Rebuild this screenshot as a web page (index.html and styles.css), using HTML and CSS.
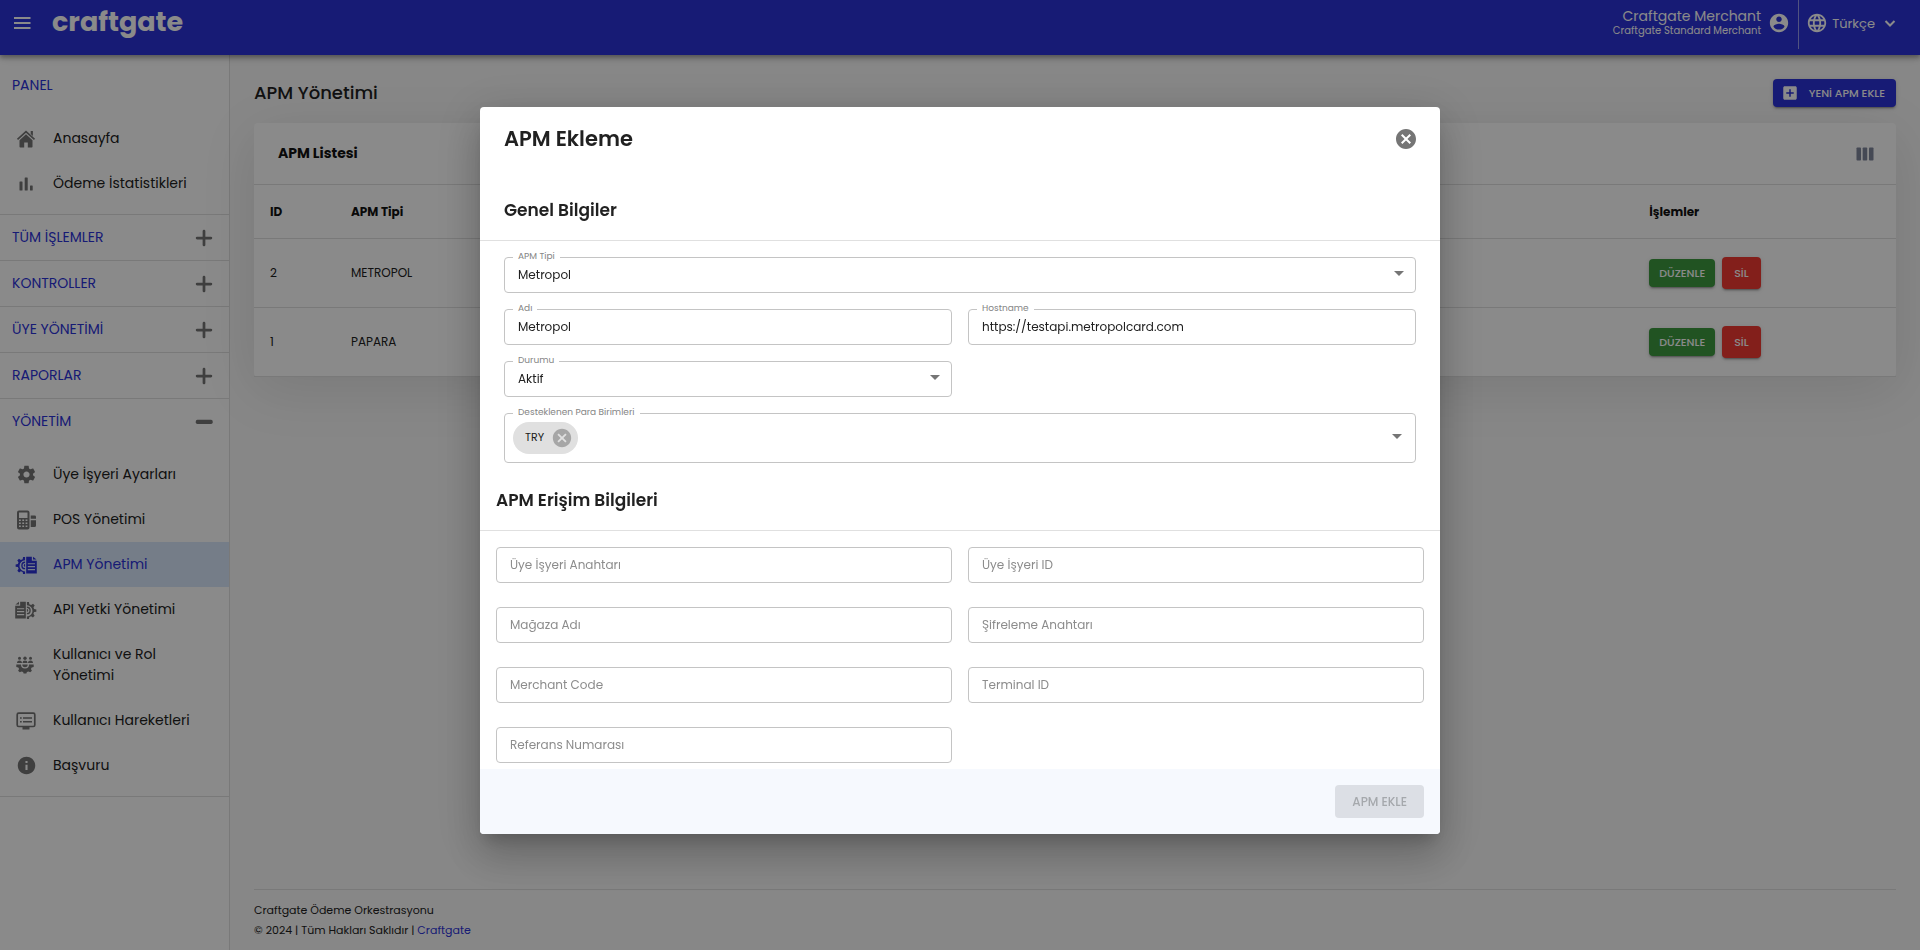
FILE: index.html
```html
<!DOCTYPE html>
<html lang="tr">
<head>
<meta charset="utf-8">
<meta name="viewport" content="width=device-width, initial-scale=1">
<title>Craftgate - APM Yönetimi</title>
<link rel="stylesheet" href="styles.css">
</head>
<body>
<svg class="sprite" aria-hidden="true">
  <symbol id="i-plus" viewBox="0 0 24 24"><path d="M12 4.500v15M4.500 12h15" fill="none" stroke="currentColor" stroke-width="3" stroke-linecap="round"/></symbol>
  <symbol id="i-minus" viewBox="0 0 24 24"><rect x="3" y="9.600" width="18.500" height="4.500" rx="1.800"/></symbol>
  <symbol id="i-close" viewBox="0 0 24 24"><path d="M12 2C6.470 2 2 6.470 2 12s4.470 10 10 10 10-4.470 10-10S17.530 2 12 2zm5 13.590L15.590 17 12 13.410 8.410 17 7 15.590 10.590 12 7 8.410 8.410 7 12 10.590 15.590 7 17 8.410 13.410 12 17 15.590z"/></symbol>
  <symbol id="i-docgear" viewBox="0 0 24 20">
    <path d="M11 1H8.700L8.300 3.500 6.300 4.400 4.200 3 2.300 5 3.700 7 3 9 .5 9.400v2.500l2.500.400.800 2-1.400 2 1.900 1.900 2-1.300 2 .800.400 2.300H11v-2.800a6.200 6.200 0 0 1 0-12.400z"/>
    <path d="M11 6.200a4.300 4.300 0 0 0 0 8.600v-1.500a2.800 2.800 0 0 1 0-5.600zM11 9a1.500 1.500 0 0 0 0 3z"/>
    <path fill-rule="evenodd" d="M12.200.700h6.300v4.500H24V19.500H12.200zM14 8v1.300h8V8zm0 3.200v1.300h8v-1.300zm0 3.200v1.300h8v-1.300z"/>
    <path d="M19.800.700 23.700 4h-3.900z"/>
  </symbol>
</svg>

<header class="topbar">
  <div class="topbar-group brand">
    <button class="icon-button" aria-label="Menü"><svg width="20" height="20" viewBox="0 0 20 20"><path d="M2 5h16.500M2 10h16.500M2 15h16.500" fill="none" stroke="currentColor" stroke-width="2"/></svg></button>
    <a class="logo" href="#">craftgate</a>
  </div>
  <div class="topbar-group account">
    <div class="merchant"><span class="merchant-name">Craftgate Merchant</span><span class="merchant-type">Craftgate Standard Merchant</span></div>
    <button class="icon-button" aria-label="Hesap"><svg width="22" height="22" viewBox="0 0 24 24"><path d="M12 2C6.480 2 2 6.480 2 12s4.480 10 10 10 10-4.480 10-10S17.520 2 12 2zm0 3c1.660 0 3 1.340 3 3s-1.340 3-3 3-3-1.340-3-3 1.340-3 3-3zm0 14.200c-2.500 0-4.710-1.280-6-3.220.030-1.990 4-3.080 6-3.080 1.990 0 5.970 1.090 6 3.080-1.290 1.940-3.500 3.220-6 3.220z"/></svg></button>
  </div>
  <div class="topbar-divider"></div>
  <button class="topbar-group language">
    <svg width="22" height="22" viewBox="0 0 24 24"><path d="M11.990 2C6.470 2 2 6.480 2 12s4.470 10 9.990 10C17.520 22 22 17.520 22 12S17.520 2 11.990 2zm6.930 6h-2.950c-.320-1.250-.780-2.450-1.380-3.560 1.840.630 3.370 1.910 4.330 3.560zM12 4.040c.830 1.200 1.480 2.530 1.910 3.960h-3.820c.430-1.430 1.080-2.760 1.910-3.960zM4.260 14C4.100 13.360 4 12.690 4 12s.100-1.360.260-2h3.380c-.080.660-.140 1.320-.140 2 0 .680.060 1.340.140 2H4.260zm.820 2h2.950c.320 1.250.780 2.450 1.380 3.560-1.840-.630-3.370-1.900-4.330-3.560zm2.950-8H5.080c.960-1.660 2.490-2.930 4.330-3.560C8.810 5.550 8.350 6.750 8.030 8zM12 19.960c-.830-1.200-1.480-2.530-1.910-3.960h3.820c-.430 1.430-1.080 2.760-1.910 3.960zM14.340 14H9.660c-.090-.660-.160-1.320-.160-2 0-.680.070-1.350.160-2h4.680c.090.650.160 1.320.160 2 0 .680-.070 1.340-.160 2zm.250 5.560c.600-1.110 1.060-2.310 1.380-3.560h2.950c-.960 1.650-2.490 2.930-4.330 3.560zM16.360 14c.080-.660.140-1.320.140-2 0-.680-.060-1.340-.140-2h3.380c.160.640.260 1.310.260 2s-.100 1.360-.260 2h-3.380z"/></svg>
    <span>Türkçe</span>
    <svg class="chevron" width="12" height="12" viewBox="0 0 12 12"><path d="M1.500 4 6 8.500 10.500 4" fill="none" stroke="currentColor" stroke-width="2"/></svg>
  </button>
</header>

<div class="shell">
  <nav class="sidebar" aria-label="Ana menü">
    <section class="nav-section">
      <h2 class="nav-title">PANEL</h2>
      <ul class="nav-list">
        <li><a class="nav-item" href="#"><svg width="20" height="20" viewBox="0 0 20 20"><path d="M1.500 10.300 10 2.600l8.500 7.700" fill="none" stroke="currentColor" stroke-width="1.700"/><path d="M14.700 2h2.200v5l-2.200-2zM10 5.300l6.500 5.900v6.600q0 .700-.700.700h-4v-5H8.200v5h-4q-.700 0-.700-.700v-6.600z"/></svg>Anasayfa</a></li>
        <li><a class="nav-item" href="#"><svg width="20" height="20" viewBox="0 0 20 20"><rect x="3.500" y="7.500" width="3" height="9" rx=".5"/><rect x="8.700" y="3.500" width="3" height="13" rx=".5"/><rect x="14" y="11.500" width="2.700" height="5" rx=".5"/></svg>Ödeme İstatistikleri</a></li>
      </ul>
    </section>
    <section class="nav-section"><button class="nav-title" aria-expanded="false">TÜM İŞLEMLER<svg width="22" height="22"><use href="#i-plus"/></svg></button></section>
    <section class="nav-section"><button class="nav-title" aria-expanded="false">KONTROLLER<svg width="22" height="22"><use href="#i-plus"/></svg></button></section>
    <section class="nav-section"><button class="nav-title" aria-expanded="false">ÜYE YÖNETİMİ<svg width="22" height="22"><use href="#i-plus"/></svg></button></section>
    <section class="nav-section"><button class="nav-title" aria-expanded="false">RAPORLAR<svg width="22" height="22"><use href="#i-plus"/></svg></button></section>
    <section class="nav-section">
      <button class="nav-title" aria-expanded="true">YÖNETİM<svg width="22" height="22"><use href="#i-minus"/></svg></button>
      <ul class="nav-list">
        <li><a class="nav-item" href="#"><svg width="21" height="21" viewBox="0 0 24 24"><path d="M19.430 12.980c.040-.320.070-.640.070-.980s-.030-.660-.070-.980l2.110-1.650c.190-.150.240-.420.120-.640l-2-3.460c-.120-.220-.390-.300-.610-.220l-2.490 1c-.520-.400-1.080-.730-1.690-.980l-.380-2.650C14.460 2.180 14.250 2 14 2h-4c-.250 0-.460.180-.490.420l-.380 2.650c-.610.250-1.170.590-1.690.980l-2.490-1c-.230-.090-.490 0-.610.220l-2 3.460c-.130.220-.070.490.120.640l2.110 1.650c-.040.320-.070.650-.070.980s.030.660.070.980l-2.110 1.650c-.190.150-.240.420-.120.640l2 3.460c.120.220.390.300.610.220l2.490-1c.520.400 1.080.730 1.690.980l.380 2.650c.030.240.240.420.490.420h4c.250 0 .460-.180.490-.420l.380-2.650c.610-.250 1.170-.590 1.690-.980l2.490 1c.230.090.490 0 .610-.220l2-3.460c.120-.220.070-.490-.120-.640l-2.110-1.650zM12 15.500c-1.930 0-3.500-1.570-3.500-3.500s1.570-3.500 3.500-3.500 3.500 1.570 3.500 3.500-1.570 3.500-3.500 3.500z"/></svg>Üye İşyeri Ayarları</a></li>
        <li><a class="nav-item" href="#"><svg width="20" height="20" viewBox="0 0 20 20"><path fill-rule="evenodd" d="M3 .5h8.500q2 0 2 2v15q0 2-2 2H3q-2 0-2-2v-15q0-2 2-2zM3 2.500v5.500h8.500V2.500zM3 9.500V11h1.800V9.500zm3.300 0V11h1.800V9.500zm3.300 0V11h1.800V9.500zM3 12.500V14h1.800v-1.500zm3.300 0V14h1.800v-1.500zm3.300 0V14h1.800v-1.500zM3 15.500V17h1.800v-1.500zm3.300 0V17h1.800v-1.500zm3.300 0V17h1.800v-1.500z"/><path d="M14.700 5.500h4q1.300 0 1.300 1.300v2h-5.300zM14.700 10.200H20V15.500q0 1.500-1.500 1.500h-3.800z"/></svg>POS Yönetimi</a></li>
        <li><a class="nav-item is-active" href="#" aria-current="page"><svg width="22" height="18"><use href="#i-docgear"/></svg>APM Yönetimi</a></li>
        <li><a class="nav-item" href="#"><svg class="mirrored" width="22" height="18"><use href="#i-docgear"/></svg>API Yetki Yönetimi</a></li>
        <li><a class="nav-item" href="#"><svg class="people" width="18" height="18" viewBox="0 0 18 18"><circle cx="3.500" cy="2.300" r="1.500"/><circle cx="9" cy="2.200" r="1.700"/><circle cx="14.500" cy="2.300" r="1.500"/><path d="M1 7q0-2.500 2.500-2.500Q6 4.500 6 7zM6.500 6.800q0-2.200 2.500-2.200t2.500 2.200V7h-5zM12 7q0-2.500 2.500-2.500T17 7zM.3 8.600H5a4 4 0 0 0 8 0h4.700v2.500l-2 .4-.8 1.600 1 1.700-1.700 1.400-1.700-.8-1.600.6-.5 1.500H7.600L7.100 16l-1.600-.6-1.700.8-1.700-1.400 1-1.700-.8-1.600-2-.4z"/><path d="M6.300 8.600h5.400a2.700 2.700 0 0 1-5.400 0z"/></svg>Kullanıcı ve Rol Yönetimi</a></li>
        <li><a class="nav-item" href="#"><svg width="20" height="20" viewBox="0 0 20 20"><rect x="1.200" y="2.200" width="17.600" height="13.300" rx="1.500" fill="none" stroke="currentColor" stroke-width="1.700"/><path d="M6.500 15.500h7v3h-7zM4 6.200h1.700v1.500H4zm3 0h9v1.500H7zM4 10h1.700v1.500H4zm3 0h9v1.500H7z"/></svg>Kullanıcı Hareketleri</a></li>
        <li><a class="nav-item" href="#"><svg width="21" height="21" viewBox="0 0 24 24"><path d="M12 2C6.480 2 2 6.480 2 12s4.480 10 10 10 10-4.480 10-10S17.520 2 12 2zm1.200 15h-2.400v-6h2.400v6zm0-7.800h-2.400V6.800h2.400v2.400z"/></svg>Başvuru</a></li>
      </ul>
    </section>
  </nav>

  <div class="content">
    <main>
      <div class="page-head">
        <h1 class="page-title">APM Yönetimi</h1>
        <button class="button button-primary"><svg width="18" height="18" viewBox="0 0 24 24"><path d="M19 3H5c-1.110 0-2 .900-2 2v14c0 1.100.890 2 2 2h14c1.100 0 2-.900 2-2V5c0-1.100-.900-2-2-2zm-2 10h-4v4h-2v-4H7v-2h4V7h2v4h4v2z"/></svg>YENİ APM EKLE</button>
      </div>
      <section class="card">
        <div class="card-head">
          <h2 class="card-title">APM Listesi</h2>
          <button class="icon-button columns" aria-label="Sütunlar"><svg width="18" height="14" viewBox="0 0 18 14"><rect x=".5" y=".5" width="4.500" height="13" rx=".8"/><rect x="6.700" y=".5" width="4.500" height="13" rx=".8"/><rect x="13" y=".5" width="4.500" height="13" rx=".8"/></svg></button>
        </div>
        <table class="table">
          <thead><tr><th class="col-id">ID</th><th>APM Tipi</th><th class="col-actions">İşlemler</th></tr></thead>
          <tbody>
            <tr><td>2</td><td>METROPOL</td><td><div class="row-actions"><button class="button button-success">DÜZENLE</button><button class="button button-danger">SİL</button></div></td></tr>
            <tr><td>1</td><td>PAPARA</td><td><div class="row-actions"><button class="button button-success">DÜZENLE</button><button class="button button-danger">SİL</button></div></td></tr>
          </tbody>
        </table>
      </section>
    </main>
    <footer class="footer">
      <div>Craftgate Ödeme Orkestrasyonu</div>
      <div>© 2024 | Tüm Hakları Saklıdır | <a href="#">Craftgate</a></div>
    </footer>
  </div>
</div>

<div class="backdrop">
  <form class="dialog" role="dialog" aria-modal="true" aria-labelledby="dialog-title">
    <div class="dialog-head">
      <h2 class="dialog-title" id="dialog-title">APM Ekleme</h2>
      <button type="button" class="icon-button dialog-close" aria-label="Kapat"><svg width="24" height="24"><use href="#i-close"/></svg></button>
    </div>
    <h3 class="dialog-section">Genel Bilgiler</h3>
    <div class="fields">
      <div class="field field-wide">
        <label class="field-label" for="type">APM Tipi</label>
        <select class="control" id="type"><option>Metropol</option></select>
        <span class="arrow"></span>
      </div>
      <div class="field">
        <label class="field-label" for="name">Adı</label>
        <input class="control" id="name" type="text" value="Metropol">
      </div>
      <div class="field">
        <label class="field-label" for="host">Hostname</label>
        <input class="control" id="host" type="text" value="https://testapi.metropolcard.com">
      </div>
      <div class="field field-left">
        <label class="field-label" for="status">Durumu</label>
        <select class="control" id="status"><option>Aktif</option></select>
        <span class="arrow"></span>
      </div>
      <div class="field field-wide">
        <label class="field-label" for="currency">Desteklenen Para Birimleri</label>
        <div class="control chips">
          <span class="chip">TRY<button type="button" class="icon-button" aria-label="TRY kaldır"><svg width="22" height="22"><use href="#i-close"/></svg></button></span>
          <input class="chips-input" id="currency" type="text">
        </div>
        <span class="arrow arrow-inset"></span>
      </div>
    </div>
    <h3 class="dialog-section dialog-section-outer">APM Erişim Bilgileri</h3>
    <div class="fields fields-outer">
      <div class="field"><input class="control" type="text" aria-label="Üye İşyeri Anahtarı" placeholder="Üye İşyeri Anahtarı"></div>
      <div class="field"><input class="control" type="text" aria-label="Üye İşyeri ID" placeholder="Üye İşyeri ID"></div>
      <div class="field"><input class="control" type="text" aria-label="Mağaza Adı" placeholder="Mağaza Adı"></div>
      <div class="field"><input class="control" type="text" aria-label="Şifreleme Anahtarı" placeholder="Şifreleme Anahtarı"></div>
      <div class="field"><input class="control" type="text" aria-label="Merchant Code" placeholder="Merchant Code"></div>
      <div class="field"><input class="control" type="text" aria-label="Terminal ID" placeholder="Terminal ID"></div>
      <div class="field"><input class="control" type="text" aria-label="Referans Numarası" placeholder="Referans Numarası"></div>
    </div>
    <div class="dialog-foot"><button class="button button-submit" disabled>APM EKLE</button></div>
  </form>
</div>
</body>
</html>
```

FILE: styles.css
```css
:root {
  --primary: #2c32d8;
  --line: #e0e0e0;
  --text: #212121;
}

* { box-sizing: border-box; }

body {
  margin: 0;
  min-height: 100vh;
  display: flex;
  flex-direction: column;
  background: #f9f9f9;
  color: var(--text);
  font: 400 14px/21px Poppins, Inter, "Noto Sans", sans-serif;
}

h1, h2, h3, ul { margin: 0; padding: 0; }
ul { list-style: none; }
button, input, select { font: inherit; color: inherit; }
button { border: 0; background: none; padding: 0; cursor: pointer; }
a { color: var(--primary); text-decoration: none; }
svg { fill: currentColor; flex: none; display: block; }
.sprite { position: absolute; width: 0; height: 0; }
.icon-button { display: inline-flex; align-items: center; justify-content: center; }

/* Top bar */
.topbar {
  display: flex;
  align-items: flex-start;
  height: 55px;
  padding: 0 24px 0 12px;
  background: var(--primary);
  color: #fff;
  box-shadow: 0 2px 4px rgba(0, 0, 0, .2), 0 4px 5px rgba(0, 0, 0, .14), 0 1px 10px rgba(0, 0, 0, .12);
  z-index: 1;
}
.topbar-group { display: flex; align-items: center; height: 46px; }
.brand { gap: 20px; margin-right: auto; }
.logo { color: #fff; font-weight: 700; font-size: 27px; line-height: 36px; padding-bottom: 2px; }
.account { gap: 7px; padding-right: 8px; }
.merchant { display: flex; flex-direction: column; text-align: right; padding-bottom: 2px; }
.merchant-name { font-size: 14px; line-height: 18px; }
.merchant-type { font-size: 10px; line-height: 12px; }
.topbar-divider { width: 1px; height: 49px; background: rgba(255, 255, 255, .5); }
.language { gap: 4px; padding-left: 7px; font-size: 13px; }
.chevron { margin-left: 5px; }

/* Layout */
.shell { flex: 1; display: flex; }
.sidebar {
  flex: 0 0 230px;
  padding-top: 8px;
  background: #fff;
  border-right: 1px solid var(--line);
}
.content {
  flex: 1;
  min-width: 0;
  display: flex;
  flex-direction: column;
  justify-content: space-between;
  padding: 24px 24px 10px;
}

/* Navigation */
.nav-section { border-bottom: 1px solid var(--line); }
.nav-title {
  display: flex;
  align-items: center;
  justify-content: space-between;
  width: 100%;
  height: 45px;
  padding: 0 14px 0 12px;
  color: var(--primary);
  font-size: 14px;
  font-weight: 400;
  text-align: left;
}
.nav-title svg { color: #757575; }
.nav-list { padding: 8px 0; }
.nav-item {
  display: grid;
  grid-template-columns: 20px 1fr;
  align-items: center;
  gap: 17px;
  padding: 12px 32px 12px 16px;
  color: var(--text);
}
.nav-item svg { justify-self: center; color: #757575; }
.nav-item.is-active { background: #d9e8fb; color: var(--primary); }
.nav-item.is-active svg { color: var(--primary); }
.mirrored { transform: scaleX(-1); }
.nav-item .people { justify-self: start; }

/* Buttons */
.button {
  display: inline-flex;
  align-items: center;
  justify-content: center;
  border-radius: 4px;
  color: #fff;
  font-size: 11px;
  line-height: 20px;
  font-weight: 500;
  padding: 4px 10px;
  box-shadow: 0 3px 1px -2px rgba(0, 0, 0, .2), 0 2px 2px rgba(0, 0, 0, .14), 0 1px 5px rgba(0, 0, 0, .12);
}
.button-primary { gap: 10px; padding: 4px 11px 4px 8px; background: var(--primary); }
.button-success { background: #3d9a40; }
.button-danger { background: #f23a32; padding: 6px 12px; }
.button-submit { background: #dcdfe5; color: #a5a8ac; padding: 6px 17px; font-size: 12px; line-height: 21px; box-shadow: none; cursor: default; }

/* Page */
.page-head { display: flex; align-items: center; justify-content: space-between; margin-bottom: 16px; }
.page-title { font-size: 18px; line-height: 28px; font-weight: 500; }
.card {
  background: #fff;
  border-radius: 4px;
  box-shadow: 0 12px 56px rgba(0, 0, 0, .1);
}
.card-head {
  display: flex;
  align-items: center;
  justify-content: space-between;
  height: 62px;
  padding: 0 22px 0 24px;
  border-bottom: 1px solid var(--line);
}
.card-title { font-size: 14px; font-weight: 700; color: #111; }
.columns { color: #80889c; }
.table { width: 100%; border-collapse: separate; border-spacing: 0; font-size: 12px; line-height: 20px; table-layout: fixed; }
.table th, .table td { text-align: left; padding: 0 16px; border-bottom: 1px solid var(--line); }
.table th { height: 54px; font-weight: 700; color: #111; }
.table td { height: 69px; }
.col-id { width: 81px; }
.col-actions { width: 16%; }
.row-actions { display: flex; align-items: center; gap: 7px; }

.footer { border-top: 1px solid var(--line); padding-top: 10px; font-size: 11px; line-height: 20px; }

/* Dialog */
.backdrop {
  position: fixed;
  inset: 0;
  z-index: 10;
  display: flex;
  align-items: center;
  justify-content: center;
  padding: 14px 32px 24px;
  background: rgba(0, 0, 0, .46);
}
.dialog {
  width: 100%;
  max-width: 960px;
  max-height: 100%;
  overflow: auto;
  background: #fff;
  border-radius: 4px;
  box-shadow: 0 11px 15px -7px rgba(0, 0, 0, .2), 0 24px 38px 3px rgba(0, 0, 0, .14), 0 9px 46px 8px rgba(0, 0, 0, .12);
}
.dialog-head { display: flex; align-items: center; justify-content: space-between; padding: 16px 22px 16px 24px; }
.dialog-title { font-size: 21px; line-height: 32px; font-weight: 600; }
.dialog-close { color: #757575; }
.dialog-section {
  padding: 25px 24px 16px;
  border-bottom: 1px solid var(--line);
  font-size: 17px;
  line-height: 28px;
  font-weight: 600;
}
.dialog-section-outer { padding: 23px 16px 16px; }
.fields {
  display: grid;
  grid-template-columns: repeat(2, minmax(0, 1fr));
  gap: 16px;
  padding: 16px 24px 0;
}
.fields-outer { row-gap: 24px; padding: 16px 16px 6px; }
.field { position: relative; }
.field-wide { grid-column: 1 / -1; }
.field-left { grid-column: 1; }
.field-label {
  position: absolute;
  left: 9px;
  top: -7px;
  padding: 0 5px;
  background: #fff;
  color: #858585;
  font-size: 9px;
  line-height: 12px;
}
.control {
  display: block;
  width: 100%;
  height: 36px;
  padding: 0 13px;
  border: 1px solid #c4c4c4;
  border-radius: 4px;
  background: none;
  font-size: 12px;
  appearance: none;
  outline: 0;
}
.control::placeholder { color: #8c8c8c; opacity: 1; }
.arrow {
  position: absolute;
  right: 12px;
  top: 50%;
  margin-top: -4px;
  border: 5px solid transparent;
  border-top-color: #757575;
  border-bottom: 0;
  pointer-events: none;
}
.arrow-inset { right: 14px; }
.chips { display: flex; align-items: center; gap: 8px; height: 50px; padding: 0 32px 0 8px; }
.chip {
  display: inline-flex;
  align-items: center;
  gap: 7px;
  height: 32px;
  padding: 0 5px 0 12px;
  border-radius: 16px;
  background: #e0e0e0;
  font-size: 11px;
}
.chip svg { color: #a6a6a6; }
.chips-input { flex: 1; min-width: 0; border: 0; outline: 0; background: none; }
.dialog-foot { display: flex; justify-content: flex-end; padding: 16px; background: #f6f9fe; }
```
